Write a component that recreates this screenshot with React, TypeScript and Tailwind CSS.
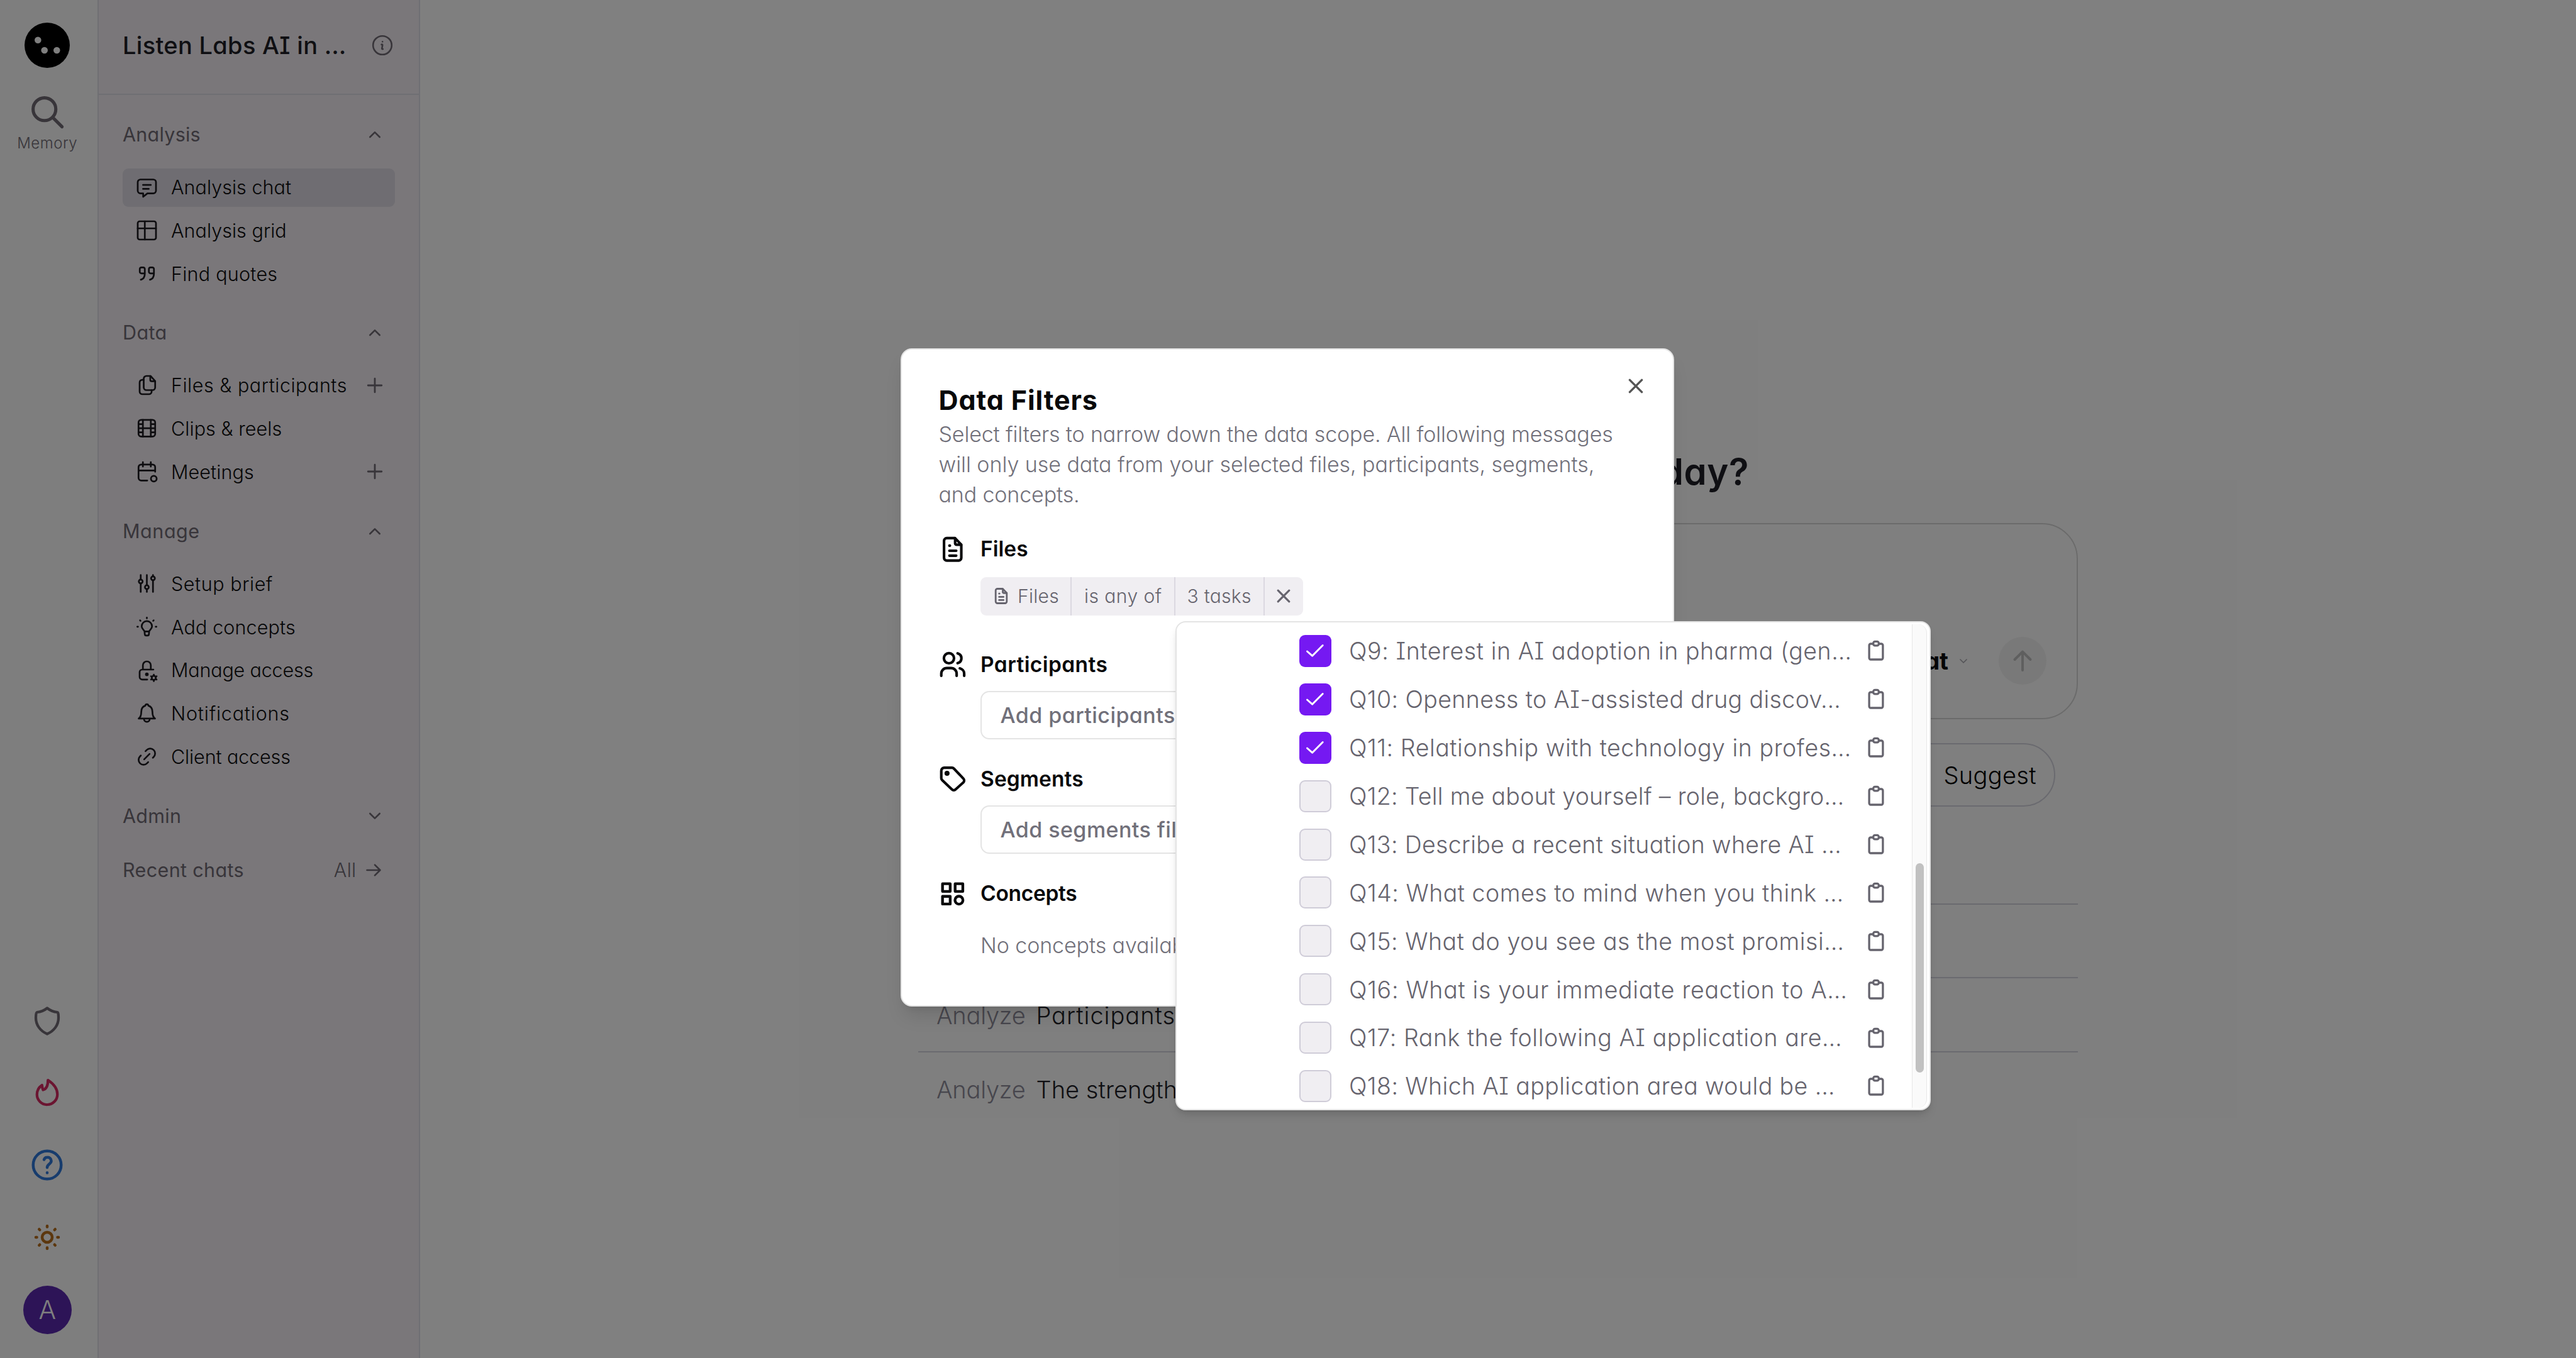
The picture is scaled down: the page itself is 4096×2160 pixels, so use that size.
import React, { type ReactNode } from 'react';

/* ---------- icon primitives ---------- */

type IconProps = { children: ReactNode; box?: string; sw?: number; className: string };

function Icon({ children, box = '0 0 18 18', sw = 1.25, className }: IconProps) {
  return (
    <svg
      viewBox={box}
      fill="none"
      stroke="currentColor"
      strokeWidth={sw}
      strokeLinecap="round"
      strokeLinejoin="round"
      className={`shrink-0 ${className}`}
    >
      {children}
    </svg>
  );
}

const navIcons: Record<string, ReactNode> = {
  chat: (
    <>
      <path d="M4.3 3h9.4a2 2 0 0 1 2 2v6.2a2 2 0 0 1-2 2H9.4L6.3 15.7v-2.5h-2a2 2 0 0 1-2-2V5a2 2 0 0 1 2-2z" />
      <path d="M6.2 7h5.7M6.2 9.9h4.2" />
    </>
  ),
  grid: (
    <>
      <rect x="2.3" y="2.3" width="13.4" height="13.4" rx="1.4" />
      <path d="M7.5 2.3v13.4M2.3 7.5h13.4" />
    </>
  ),
  quotes: (
    <>
      <path d="M7.5 8.7H5a1.2 1.2 0 0 1-1.2-1.2v-2A1.2 1.2 0 0 1 5 4.3h1.3a1.2 1.2 0 0 1 1.2 1.2V9c0 2.4-1 3.8-2.9 4.3" />
      <path d="M14.2 8.7h-2.5a1.2 1.2 0 0 1-1.2-1.2v-2a1.2 1.2 0 0 1 1.2-1.2H13a1.2 1.2 0 0 1 1.2 1.2V9c0 2.4-1 3.8-2.9 4.3" />
    </>
  ),
  files: (
    <>
      <path d="M8.7 2.3h3l3.4 3.8v4.6a2 2 0 0 1-2 2H8.7a2 2 0 0 1-2-2V4.3a2 2 0 0 1 2-2z" />
      <path d="M11.5 2.4v2.8a1 1 0 0 0 1 1h2.5M6.7 5.1h-1a2 2 0 0 0-2 2v6.6a2 2 0 0 0 2 2h4.8a2 2 0 0 0 2-2v-1" />
    </>
  ),
  film: (
    <>
      <rect x="2.9" y="2.7" width="12.2" height="12.2" rx="1.9" />
      <path d="M6.1 2.7v12.2M11.9 2.7v12.2M2.9 8.8h12.2M2.9 5.8h3.2M2.9 11.8h3.2M11.9 5.8h3.2M11.9 11.8h3.2" />
    </>
  ),
  meetings: (
    <>
      <path d="M9.3 15.4H4.9a2 2 0 0 1-2-2V5.6a2 2 0 0 1 2-2h8.2a2 2 0 0 1 2 2v3.3M2.9 8h12.2M6.1 1.9v3.2M11.9 1.9v3.2" />
      <circle cx="14.1" cy="14" r="2.1" />
    </>
  ),
  sliders: (
    <>
      <path d="M4.5 2.6v3.2M4.5 8.8V15M9 2.6V10M9 13v2M13.5 2.6v.9M13.5 6.5V15" />
      <circle cx="4.5" cy="7.3" r="1.4" />
      <circle cx="9" cy="11.5" r="1.4" />
      <circle cx="13.5" cy="5" r="1.4" />
    </>
  ),
  bulb: (
    <>
      <path d="M7.3 12.2C7 10.9 5.2 10.5 5.2 8.4a3.8 3.8 0 0 1 7.6 0c0 2.1-1.8 2.5-2.1 3.8zM7.3 12.2l.2 2.1a1 1 0 0 0 1 .9h1a1 1 0 0 0 1-.9l.2-2.1" />
      <path d="M9 2v.5M2 8.7h.5M15.5 8.7h.5M4 4l.35.35M14 4l-.35.35" />
    </>
  ),
  lock: (
    <>
      <path d="M9.3 15.6H5.6a1.9 1.9 0 0 1-1.9-1.9v-3.5a1.9 1.9 0 0 1 1.9-1.9h8.2M6.1 8.3V5.2a2.9 2.9 0 0 1 5.8 0v3.1" />
      <circle cx="9" cy="11.8" r=".7" fill="currentColor" />
      <circle cx="14.1" cy="14.4" r="1.5" />
      <path d="M14.1 12.9v-.9M14.1 15.9v.9M12.8 13.65l-.75-.45M15.4 15.15l.75.45M12.8 15.15l-.75.45M15.4 13.65l.75-.45" />
    </>
  ),
  bell: (
    <>
      <path d="M9 2.4c-.6 0-1 .4-1.1 1C6 4 4.9 5.8 4.9 8c0 2.2-.3 3.9-1.9 4.9h12c-1.6-1-1.9-2.7-1.9-4.9 0-2.2-1.1-4-3-4.6-.1-.6-.5-1-1.1-1z" />
      <path d="M6.9 13.2a2.1 2.1 0 0 0 4.2 0" />
    </>
  ),
  link: (
    <path d="M7 11l4-4M8 5l.9-.9a3.6 3.6 0 0 1 5.1 5.1l-.6.6M10 13l-.9.9A3.6 3.6 0 0 1 4 8.8l.6-.6" />
  ),
};

const Chevron = ({ down = false }: { down?: boolean }) => (
  <Icon box="0 0 20 12" sw={2.6} className={`h-3 w-5 ${down ? 'rotate-180' : ''}`}>
    <path d="M2.3 10 10 2.3 17.7 10" />
  </Icon>
);

const Plus = () => (
  <Icon box="0 0 26 26" sw={2.8} className="mr-[19px] size-[26px] text-[#706a74]">
    <path d="M13 2.2v21.6M2.2 13h21.6" />
  </Icon>
);

const Close = ({ className }: { className: string }) => (
  <Icon box="0 0 24 24" sw={3.4} className={className}>
    <path d="M2.4 2.4 21.6 21.6M21.6 2.4 2.4 21.6" />
  </Icon>
);

const DocIcon = ({ className, sw = 1.9 }: { className: string; sw?: number }) => (
  <Icon box="0 0 20 20" sw={sw} className={className}>
    <path d="M5.7 1.8h6l4.6 4.8v9.6a2 2 0 0 1-2 2H5.7a2 2 0 0 1-2-2V3.8a2 2 0 0 1 2-2z" />
    <path d="M11.8 2v3.6a1 1 0 0 0 1 1h3.4M7.6 11h5M7.6 14.6h5M7.6 7.3h.4" />
  </Icon>
);

/* ---------- left rail ---------- */

function Rail() {
  return (
    <aside className="flex w-[157px] shrink-0 flex-col items-center justify-between border-r-2 border-[#dedee6] bg-[#fcfcfc] pr-[4.5px]">
      <div className="flex flex-col items-center pt-9">
        <svg viewBox="0 0 72 72" className="size-[72px]">
          <circle cx="36" cy="36" r="36" fill="#000" />
          <g fill="#fff">
            <circle cx="21.3" cy="27.7" r="5.3" />
            <circle cx="31.7" cy="44" r="5.3" />
            <circle cx="51.3" cy="44" r="5.3" />
          </g>
        </svg>
        <Icon box="0 0 24 24" sw={2} className="mt-10 size-[61px] text-[#706a74]">
          <circle cx="10.1" cy="10.1" r="7.1" />
          <path d="m15.3 15.3 5.8 5.8" />
        </Icon>
        <div className="mt-[4px] text-[24px] leading-[30px] font-light tracking-[0.02em] text-[#706a74]">Memory</div>
      </div>
      <div className="flex flex-col items-center pb-[38.5px]">
        <Icon box="0 0 24 24" sw={1.7} className="size-[60px] text-[#706a74]">
          <path d="M12 3.8C10 5.4 8 6.2 5.5 6.4c-.6 0-.7 2.1-.7 3.6 0 4.6 2.9 8.4 7.2 10.2 4.3-1.8 7.2-5.6 7.2-10.2 0-1.5-.1-3.6-.7-3.6C16 6.2 14 5.4 12 3.8z" />
        </Icon>
        <Icon box="0 0 24 24" sw={1.7} className="mt-[53px] size-[60px] text-[#d62a63]">
          <path d="M12.5 4.4c3.3 2.2 6 5.3 6 9a6.5 6.5 0 0 1-13 .2c0-2.6 1.1-4.6 3.2-6 .1 1.2.3 2.2.7 3 2.6-.6 3.1-3.4 3.1-6.2z" />
        </Icon>
        <Icon box="0 0 24 24" sw={1.8} className="mt-14 size-[60px] text-[#2f78db]">
          <circle cx="12" cy="12" r="8.9" />
          <path d="M10 8.6c.3-.9 1.1-1.5 2.2-1.5a2.3 2.3 0 0 1 2.4 2.3c0 2-2.6 2-2.6 4.2M12 16.9v.1" />
        </Icon>
        <Icon box="0 0 24 24" sw={1.8} className="mt-[55px] size-[60px] text-[#b86f1c]">
          <circle cx="12" cy="12" r="3.2" />
          <path d="M12 4.8v.6M12 18.6v.6M4.8 12h.6M18.6 12h.6M6.9 6.9l.4.4M16.7 16.7l.4.4M17.1 6.9l-.4.4M7.3 16.7l-.4.4" />
        </Icon>
        <div className="mt-[47px] flex size-[77px] items-center justify-center rounded-full bg-[#5a28ae] text-[41px] leading-none font-light text-white">
          A
        </div>
      </div>
    </aside>
  );
}

/* ---------- sidebar ---------- */

type NavItem = { icon: string; label: string; track: string; active?: boolean; add?: boolean };

const analysis: NavItem[] = [
  { icon: 'chat', label: 'Analysis chat', track: 'tracking-[0.001em]', active: true },
  { icon: 'grid', label: 'Analysis grid', track: 'tracking-[0.001em]' },
  { icon: 'quotes', label: 'Find quotes', track: 'tracking-[0.008em]' },
];
const data: NavItem[] = [
  { icon: 'files', label: 'Files & participants', track: 'tracking-[0.017em]', add: true },
  { icon: 'film', label: 'Clips & reels', track: 'tracking-[0.002em]' },
  { icon: 'meetings', label: 'Meetings', track: 'tracking-[0.003em]', add: true },
];
const manage: NavItem[] = [
  { icon: 'sliders', label: 'Setup brief', track: 'tracking-[0.018em]' },
  { icon: 'bulb', label: 'Add concepts', track: 'tracking-[0.004em]' },
  { icon: 'lock', label: 'Manage access', track: 'tracking-[-0.006em]' },
  { icon: 'bell', label: 'Notifications', track: 'tracking-[0.026em]' },
  { icon: 'link', label: 'Client access', track: 'tracking-[-0.004em]' },
];

function SectionLabel({ label, track, children }: { label: string; track: string; children: ReactNode }) {
  return (
    <div className="flex h-[61px] items-center justify-between pr-[22px] text-[30.5px] text-[#706a74]">
      <span className={track}>{label}</span>
      {children}
    </div>
  );
}

function Nav({ items }: { items: NavItem[] }) {
  return (
    <nav className="mt-[23px] flex flex-col gap-[7.6px]">
      {items.map((it) => (
        <div
          key={it.label}
          className={`flex h-[61.2px] items-center rounded-[9px] pl-[19px] text-[30.5px] font-light ${it.active ? 'bg-[#dfdbe4]' : ''}`}
        >
          <Icon className="size-[39px] text-[#1c1a20]">{navIcons[it.icon]}</Icon>
          <span className={`ml-[19px] grow whitespace-nowrap text-[#0c0c0e] ${it.track}`}>{it.label}</span>
          {it.add && <Plus />}
        </div>
      ))}
    </nav>
  );
}

function Sidebar() {
  return (
    <aside className="w-[511px] shrink-0 border-r-2 border-[#dedee6] bg-[#f4eff4]">
      <div className="flex h-[151px] items-center justify-between border-b-2 border-[#dedee6] pr-[40px] pb-[5px] pl-[38px]">
        <div className="text-[38px] font-medium tracking-[0.008em] whitespace-nowrap text-[#1e1e26]">Listen Labs AI in …</div>
        <Icon box="0 0 36 36" sw={2.6} className="size-9 text-[#706a74]">
          <circle cx="18" cy="18" r="14.8" />
          <path d="M16.6 16.8c1-.4 1.8.1 1.6 1.1l-.9 5c-.2 1 .5 1.5 1.5 1.2M18.2 12.2v.1" />
        </Icon>
      </div>
      <div className="pt-[32.5px] pr-[38.5px] pl-[38px]">
        <SectionLabel label="Analysis" track="tracking-[0.008em]"><Chevron /></SectionLabel>
        <Nav items={analysis} />
        <div className="h-8" />
        <SectionLabel label="Data" track="tracking-[0.012em]"><Chevron /></SectionLabel>
        <Nav items={data} />
        <div className="h-[33px]" />
        <SectionLabel label="Manage" track="tracking-[0.018em]"><Chevron /></SectionLabel>
        <Nav items={manage} />
        <div className="h-[33px]" />
        <SectionLabel label="Admin" track="tracking-[0.01em]"><Chevron down /></SectionLabel>
        <div className="h-[25px]" />
        <SectionLabel label="Recent chats" track="tracking-[0.012em]">
          <span className="flex items-center gap-[15px]">
            <span className="font-light tracking-[0.01em]">All</span>
            <Icon box="0 0 24 20" sw={2.6} className="h-5 w-6">
              <path d="M1.5 10h20.5M14 1.6l8.4 8.4L14 18.4" />
            </Icon>
          </span>
        </SectionLabel>
      </div>
    </aside>
  );
}

/* ---------- chat page ---------- */

function SuggestionRow({ text, track }: { text: string; track: string }) {
  return (
    <div className="flex h-[117.7px] items-center gap-[17px] border-b-[2.5px] border-[#d4d4de] pt-[2px] pl-[29px] text-[38px] font-light whitespace-nowrap last:border-b-0">
      <span className="tracking-[-0.006em] text-[#8e8c9a]">Analyze</span>
      <span className={`text-[#1e1e26] ${track}`}>{text}</span>
    </div>
  );
}

function ChatPage() {
  return (
    <main className="grow bg-white">
      <div className="ml-[792px] w-[1844px] pt-[715px]">
        <h1 className="h-[70px] pr-[523px] text-right text-[58px] leading-[70px] font-semibold tracking-[0.01em] whitespace-nowrap text-[#1e1e26]">
          today?
        </h1>
        <div className="mt-[47px] flex h-[312px] items-end rounded-[57px] border-[2.5px] border-[#d6d6d6] pr-12 pb-[53px]">
          <div className="flex grow items-center justify-end">
            <span className="text-[38px] font-bold text-[#0c0c0e]">Chat</span>
            <Icon box="0 0 12 7" sw={1.7} className="ml-[18px] h-[7px] w-3 text-[#a8a8b0]">
              <path d="M1 1l5 5 5-5" />
            </Icon>
            <span className="ml-[50px] flex size-[76px] items-center justify-center rounded-full bg-[#f2f2f2]">
              <Icon box="0 0 30 34" sw={4} className="h-[34px] w-[30px] text-[#bebebe]">
                <path d="M15 32V2.6M2.6 15 15 2.6 27.4 15" />
              </Icon>
            </span>
          </div>
        </div>
        <div className="mt-[38px] flex justify-end pr-9">
          <div className="flex h-[101px] w-[258px] items-center justify-end rounded-full border-[2.5px] border-[#d4d4de] pt-[2px] pr-[28px] text-[38px] font-light tracking-[0.009em] text-black">
            Suggest
          </div>
        </div>
        <div className="mt-[38px]">
          <div className="h-[117.7px] border-b-[2.5px] border-[#d4d4de]" />
          <div className="h-[117.7px] border-b-[2.5px] border-[#d4d4de]" />
          <SuggestionRow text="Participants" track="tracking-[0.026em]" />
          <SuggestionRow text="The strength" track="tracking-[0.001em]" />
        </div>
      </div>
    </main>
  );
}

/* ---------- filter dialog ---------- */

function FilterHeading({ icon, label, track }: { icon: ReactNode; label: string; track: string }) {
  return (
    <div className="flex h-12 items-center gap-[23px] text-[#08080a]">
      {icon}
      <span className={`text-[33.5px] font-semibold ${track}`}>{label}</span>
    </div>
  );
}

function FilterButton({ children }: { children: ReactNode }) {
  return (
    <div className="mt-[18px] ml-[66.5px] flex h-[77px] w-[420px] items-center rounded-[14px] border-2 border-[#e4e4e4] pl-[29.5px] text-[34px] font-medium tracking-[0.013em] whitespace-nowrap text-[#71707a]">
      {children}
    </div>
  );
}

function FiltersDialog() {
  return (
    <section className="absolute top-[554px] left-[1431.5px] h-[1047px] w-[1230px] rounded-[18px] border-2 border-[#e4e4e4] bg-white pt-[54px] pl-[59px] shadow-[0_20px_30px_-6px_rgba(0,0,0,0.12),0_8px_12px_-8px_rgba(0,0,0,0.12)]">
      <Close className="absolute top-[46px] right-[47px] size-6 text-[#555]" />
      <h2 className="h-[52px] text-[43px] leading-[52px] font-bold tracking-[0.021em] text-[#08080a]">Data Filters</h2>
      <p className="mt-[5px] text-[34px] leading-[48px] font-light whitespace-nowrap text-[#71707a]">
        <span className="tracking-[-0.0045em]">Select filters to narrow down the data scope. All following messages</span>
        <br />
        <span className="tracking-[-0.0015em]">will only use data from your selected files, participants, segments,</span>
        <br />
        <span className="tracking-[-0.004em]">and concepts.</span>
      </p>

      <div className="mt-[38.5px]">
        <FilterHeading icon={<DocIcon className="size-[43.6px]" />} label="Files" track="tracking-[0em]" />
        <div className="mt-[20px] ml-[66.5px] flex h-[61.5px] w-[513px] rounded-[9px] bg-[#f0eef2] text-[30px] leading-[61.5px] font-light whitespace-nowrap text-[#66646e]">
          <span className="flex w-[145px] items-center border-r-[2.5px] border-[#dbd8e1] pl-[19px] tracking-[0.01em]">
            <DocIcon className="mr-[12px] size-[28px]" sw={2} />
            Files
          </span>
          <span className="w-[164.5px] border-r-[2.5px] border-[#dbd8e1] pl-[20px] tracking-[0.015em]">is any of</span>
          <span className="w-[142px] border-r-[2.5px] border-[#dbd8e1] pl-[19px] tracking-[0.01em]">3 tasks</span>
          <span className="flex grow items-center justify-center">
            <Close className="size-[22px]" />
          </span>
        </div>
      </div>

      <div className="mt-[54px]">
        <FilterHeading
          label="Participants"
          track="tracking-[0.012em]"
          icon={
            <Icon box="0 0 20 20" sw={1.9} className="size-[43.6px]">
              <circle cx="7.3" cy="5.5" r="3.7" />
              <path d="M13.6 1.9c1.9.5 2.8 2 2.8 3.6s-.9 3.1-2.8 3.6M1.7 18.3v-1.6a4 4 0 0 1 4-4h3.2a4 4 0 0 1 4 4v1.6M15.2 12.9c1.9.5 3.2 2 3.2 3.8v1.6" />
            </Icon>
          }
        />
        <FilterButton>Add participants filter</FilterButton>
      </div>

      <div className="mt-[39px]">
        <FilterHeading
          label="Segments"
          track="tracking-[0.002em]"
          icon={
            <Icon box="0 0 20 20" sw={1.9} className="size-[43.6px]">
              <path d="M3.9 1.9h5.6a2 2 0 0 1 1.4.6l6.9 7.3a2 2 0 0 1 0 2.8l-5.6 5.1a2 2 0 0 1-2.8 0L2.3 10.9a2 2 0 0 1-.6-1.4V4.1a2.2 2.2 0 0 1 2.2-2.2z" />
              <circle cx="5.9" cy="6" r=".9" fill="currentColor" />
            </Icon>
          }
        />
        <FilterButton>Add segments filter</FilterButton>
      </div>

      <div className="mt-[39.5px]">
        <FilterHeading
          label="Concepts"
          track="tracking-[-0.009em]"
          icon={
            <Icon box="0 0 20 20" sw={2} className="size-[43.6px]">
              <rect x="2.6" y="2.6" width="5.6" height="5.6" />
              <rect x="11.8" y="2.6" width="5.6" height="5.6" />
              <rect x="2.6" y="11.8" width="5.6" height="5.6" />
              <circle cx="14.6" cy="14.6" r="2.9" />
            </Icon>
          }
        />
        <p className="mt-[34px] ml-[66.5px] text-[34px] leading-[48px] font-light tracking-[-0.003em] text-[#71707a]">No concepts available</p>
      </div>
    </section>
  );
}

/* ---------- question picker popover ---------- */

const questions: { text: string; track: string; checked?: boolean }[] = [
  { text: 'Q9: Interest in AI adoption in pharma (gen…', track: 'tracking-[0.0153em]', checked: true },
  { text: 'Q10: Openness to AI-assisted drug discov…', track: 'tracking-[0.0103em]', checked: true },
  { text: 'Q11: Relationship with technology in profes…', track: 'tracking-[0.0145em]', checked: true },
  { text: 'Q12: Tell me about yourself – role, backgro…', track: 'tracking-[0.007em]' },
  { text: 'Q13: Describe a recent situation where AI …', track: 'tracking-[0.0085em]' },
  { text: 'Q14: What comes to mind when you think …', track: 'tracking-[0.0135em]' },
  { text: 'Q15: What do you see as the most promisi…', track: 'tracking-[0.014em]' },
  { text: 'Q16: What is your immediate reaction to A…', track: 'tracking-[0.0188em]' },
  { text: 'Q17: Rank the following AI application are…', track: 'tracking-[0.0153em]' },
  { text: 'Q18: Which AI application area would be …', track: 'tracking-[0.011em]' },
];

function QuestionPicker() {
  return (
    <section className="absolute top-[988px] left-[1869px] flex h-[778px] w-[1200.5px] rounded-[16px] border-[2.5px] border-[#e4e4e4] bg-white p-[2.5px] shadow-[0_10px_16px_-4px_rgba(0,0,0,0.14),0_4px_8px_-4px_rgba(0,0,0,0.12)]">
      <ul className="grow pt-[4.5px]">
        {questions.map((q) => (
          <li key={q.text} className="flex h-[76.9px] items-center pl-[192px] text-[#66646e]">
            {q.checked ? (
              <span className="flex size-[51px] items-center justify-center rounded-[9px] bg-[#7519f2]">
                <Icon box="0 0 30 22" sw={3} className="h-[22px] w-[30px] text-white">
                  <path d="M2.5 12 10.6 19.2 27.2 2.5" />
                </Icon>
              </span>
            ) : (
              <span className="size-[51px] rounded-[9px] border-[2.5px] border-[#cfccd8] bg-[#f0eef2]" />
            )}
            <span className={`ml-[28.5px] w-[817.5px] pt-[2px] text-[37.5px] font-light whitespace-nowrap ${q.track}`}>{q.text}</span>
            <Icon box="0 0 26 34" sw={3.3} className="ml-[7.5px] h-[34px] w-[26px]">
              <path d="M8.5 6H4.6a2.5 2.5 0 0 0-2.5 2.5v20a2.5 2.5 0 0 0 2.5 2.5h16.8a2.5 2.5 0 0 0 2.5-2.5v-20A2.5 2.5 0 0 0 21.4 6h-3.9" />
              <rect x="8.7" y="2.4" width="8.6" height="6.4" rx="2.6" />
            </Icon>
          </li>
        ))}
      </ul>
      <div className="mr-px h-full w-[24px] shrink-0 rounded-r-[14px] border-x border-[#e8e8e8] bg-[#fafafa] pt-[380px]">
        <div className="mx-auto h-[333px] w-[13px] rounded-full bg-[#c1c1c1]" />
      </div>
    </section>
  );
}

export default function App() {
  return (
    <div className="relative flex h-[2160px] w-[4096px] overflow-hidden [font-family:Inter,sans-serif] [font-feature-settings:'cv11','cv08']">
      <Rail />
      <Sidebar />
      <ChatPage />
      <div className="absolute inset-0 bg-black/50" />
      <FiltersDialog />
      <QuestionPicker />
    </div>
  );
}
